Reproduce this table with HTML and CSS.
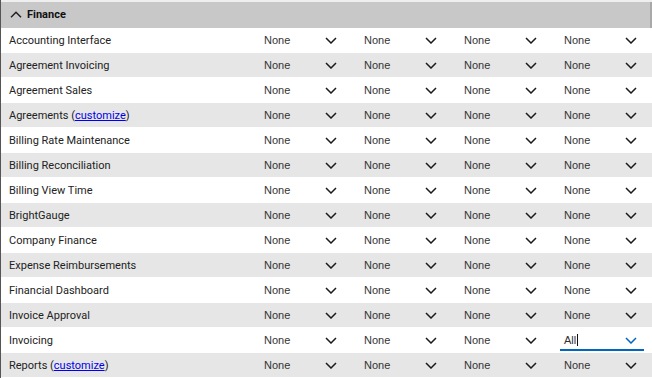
FILE: index.html
```html
<!DOCTYPE html>
<html>
<head>
<meta charset="utf-8">
<link rel="stylesheet" href="styles.css">
</head>
<body>
<div class="panel">
  <div class="topstrip"></div>
  <div class="header">
    <svg class="up" width="12" height="7" viewBox="0 0 12 7"><path d="M1 6.2 L6 1.2 L11 6.2" fill="none" stroke="#222" stroke-width="1.5"/></svg>
    <span class="title">Finance</span>
  </div>
  <div class="rows" id="rows"></div>
</div>
<script src="app.js"></script>
</body>
</html>
```
FILE: app.js
```js
const items = [
  ["Accounting Interface"],
  ["Agreement Invoicing"],
  ["Agreement Sales"],
  ["Agreements", true],
  ["Billing Rate Maintenance"],
  ["Billing Reconciliation"],
  ["Billing View Time"],
  ["BrightGauge"],
  ["Company Finance"],
  ["Expense Reimbursements"],
  ["Financial Dashboard"],
  ["Invoice Approval"],
  ["Invoicing", false, true],
  ["Reports", true]
];
const chev = (cls) => '<svg class="chev ' + cls + '" width="12" height="7" viewBox="0 0 12 7"><path d="M1 1 L6 6 L11 1" fill="none" stroke-width="1.5"/></svg>';
const rows = document.getElementById('rows');
items.forEach(([name, cust, focus], i) => {
  const row = document.createElement('div');
  row.className = 'row' + (i % 2 ? ' alt' : '');
  let html = '<div class="label">' + name + (cust ? ' (<a href="#">customize</a>)' : '') + '</div>';
  for (let c = 0; c < 4; c++) {
    if (focus && c === 3) {
      html += '<div class="cell"><div class="select focused"><span class="val">All<span class="caret"></span></span>' + chev('blue') + '</div></div>';
    } else {
      html += '<div class="cell"><div class="select"><span class="val">None</span>' + chev('') + '</div></div>';
    }
  }
  row.innerHTML = html;
  rows.appendChild(row);
});
```
FILE: styles.css
```css
html, body {
  margin: 0;
  padding: 0;
  background: #fff;
}
.panel {
  width: 651px;
  height: 378px;
  overflow: hidden;
  border-left: 1px solid #555;
  font-family: Roboto, "Liberation Sans", sans-serif;
}
.topstrip {
  height: 2px;
  background: #efefef;
}
.header {
  height: 26px;
  background: #c8c8c8;
  display: flex;
  align-items: center;
  border-right: 2px solid #a9a9a9;
  padding-bottom: 1px;
  box-sizing: border-box;
}
.up {
  margin-left: 9px;
  margin-right: 5px;
}
.title {
  font-weight: bold;
  font-size: 11px;
  color: #111;
}
.row {
  display: grid;
  grid-template-columns: 259px repeat(4, 100px);
  height: 24px;
  border-bottom: 1px solid #fff;
  align-items: center;
  background: #fff;
}
.row.alt {
  background: #e6e6e6;
}
.label {
  padding-left: 8px;
  font-size: 11px;
  color: #222;
  white-space: nowrap;
}
.label a {
  color: #0000ee;
  text-decoration: underline;
}
.cell {
  display: flex;
  align-items: center;
}
.select {
  width: 84px;
  height: 22px;
  box-sizing: border-box;
  display: flex;
  align-items: center;
  justify-content: space-between;
  padding: 0 7px 0 4px;
  font-family: "Liberation Sans", Arial, sans-serif;
  font-size: 11px;
  color: #333;
}
.select.focused {
  border-bottom: 2px solid #0067c0;
  padding-top: 2px;
}
.chev path {
  stroke: #1a1a1a;
}
.chev.blue path {
  stroke: #0067c0;
}
.val {
  display: flex;
  align-items: center;
}
.caret {
  display: inline-block;
  width: 1px;
  height: 12px;
  background: #111;
  margin-left: 1px;
}
```
